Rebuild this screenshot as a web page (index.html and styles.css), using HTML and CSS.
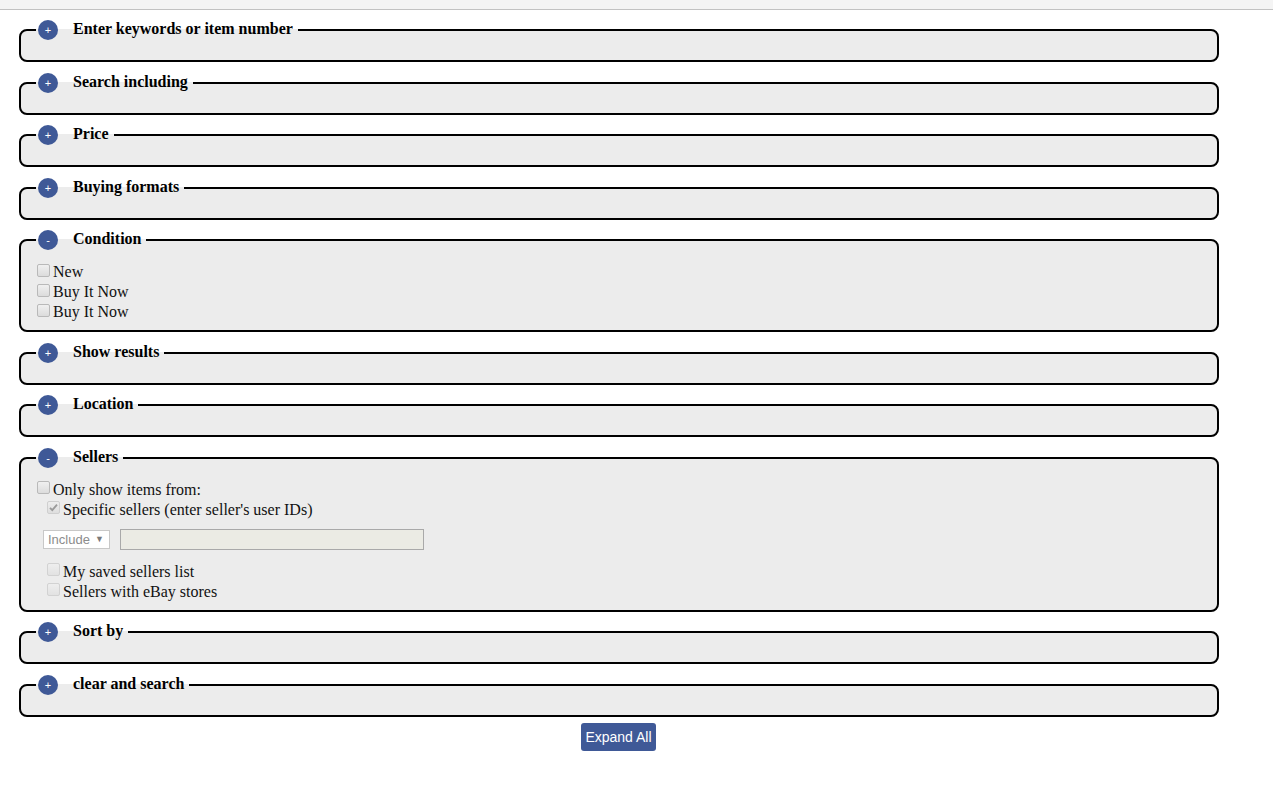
FILE: index.html
```html
<!DOCTYPE html>
<html lang="en">
<head>
<meta charset="utf-8">
<title>Advanced search</title>
<link rel="stylesheet" href="styles.css">
</head>
<body>
<div class="topbar"></div>
<main class="panel">
  <fieldset class="group">
    <legend class="group-title"><span class="toggle">+</span><span class="label">Enter keywords or item number</span></legend>
  </fieldset>
  <fieldset class="group">
    <legend class="group-title"><span class="toggle">+</span><span class="label">Search including</span></legend>
  </fieldset>
  <fieldset class="group">
    <legend class="group-title"><span class="toggle">+</span><span class="label">Price</span></legend>
  </fieldset>
  <fieldset class="group">
    <legend class="group-title"><span class="toggle">+</span><span class="label">Buying formats</span></legend>
  </fieldset>
  <fieldset class="group">
    <legend class="group-title"><span class="toggle">-</span><span class="label">Condition</span></legend>
    <div class="row"><span class="check"></span>New</div>
    <div class="row"><span class="check"></span>Buy It Now</div>
    <div class="row"><span class="check"></span>Buy It Now</div>
  </fieldset>
  <fieldset class="group">
    <legend class="group-title"><span class="toggle">+</span><span class="label">Show results</span></legend>
  </fieldset>
  <fieldset class="group">
    <legend class="group-title"><span class="toggle">+</span><span class="label">Location</span></legend>
  </fieldset>
  <fieldset class="group">
    <legend class="group-title"><span class="toggle">-</span><span class="label">Sellers</span></legend>
    <div class="row"><span class="check"></span>Only show items from:</div>
    <div class="row sub"><span class="check checked"><svg viewBox="0 0 13 13" width="13" height="13"><path d="M3 6.8 L5.3 9.2 L10 3.6" fill="none" stroke="#9a9a9a" stroke-width="1.8"/></svg></span>Specific sellers (enter seller's user IDs)</div>
    <div class="controls">
      <span class="select">Include <span class="arrow">&#9660;</span></span>
      <span class="text-input"></span>
    </div>
    <div class="row sub faded"><span class="check"></span>My saved sellers list</div>
    <div class="row sub faded"><span class="check"></span>Sellers with eBay stores</div>
  </fieldset>
  <fieldset class="group">
    <legend class="group-title"><span class="toggle">+</span><span class="label">Sort by</span></legend>
  </fieldset>
  <fieldset class="group">
    <legend class="group-title"><span class="toggle">+</span><span class="label">clear and search</span></legend>
  </fieldset>
  <div class="actions"><button class="expand" type="button">Expand All</button></div>
</main>
</body>
</html>
```

FILE: styles.css
```css
html, body {
  margin: 0;
  padding: 0;
  background: #fff;
}
body {
  font-family: "Liberation Serif", "Times New Roman", serif;
  font-size: 16px;
  color: #111;
}
.topbar {
  height: 9px;
  background: #f4f4f4;
  border-bottom: 1px solid #c2c2c2;
}
.panel {
  width: 1200px;
  padding: 10px 0 0 19px;
}
.group {
  margin: 0 0 10.5px 0;
  border: 2px solid #000;
  border-radius: 8px;
  background: #ececec;
  padding: 12px 12px 8px 12px;
  min-width: 0;
}
.group-title {
  display: flex;
  align-items: center;
  margin-left: 3px;
  padding: 0 5px 0 2px;
  height: 20px;
}
.toggle {
  width: 20px;
  height: 20px;
  border-radius: 50%;
  background: #3f5997;
  color: #fff;
  font-family: "Liberation Sans", Arial, sans-serif;
  font-size: 11px;
  line-height: 20px;
  text-align: center;
}
.label {
  position: relative;
  top: -1px;
  margin-left: 15px;
  font-weight: bold;
  font-size: 16px;
  color: #000;
  line-height: 20px;
}
.row {
  display: flex;
  align-items: center;
  height: 20px;
  line-height: 20px;
  color: #111;
}
.row.sub {
  padding-left: 10px;
}
.check {
  box-sizing: border-box;
  width: 13px;
  height: 13px;
  margin: 0 3px 0 4px;
  border: 1px solid #b9b9b9;
  border-radius: 2px;
  background: linear-gradient(#f0f0f0, #dcdcdc);
  position: relative;
  top: -2px;
  flex: none;
}
.check.checked {
  background: linear-gradient(#ededed, #dedede);
  border-color: #cfcfcf;
}
.check svg {
  display: block;
  margin: -1px;
}
.faded .check {
  border-color: #d2d2d2;
  background: linear-gradient(#eeeeee, #e2e2e2);
}
.controls {
  display: flex;
  align-items: center;
  padding: 9px 0 12px 10px;
  gap: 10px;
}
.select {
  box-sizing: border-box;
  display: inline-flex;
  align-items: center;
  width: 67px;
  height: 19px;
  padding: 0 4px;
  background: #fff;
  border: 1px solid #c8c8c8;
  color: #8c8c8c;
  font-family: "Liberation Sans", Arial, sans-serif;
  font-size: 13px;
}
.arrow {
  font-size: 9px;
  margin-left: 5px;
  color: #7a7a7a;
}
.text-input {
  box-sizing: border-box;
  width: 304px;
  height: 21px;
  background: #ebebe4;
  border: 1px solid #a9a9a9;
}
.actions {
  display: flex;
  justify-content: center;
}
.expand {
  width: 75px;
  height: 28px;
  margin: -4px 1px 0 0;
  border: none;
  border-radius: 3px;
  background: #3f5997;
  color: #fff;
  font-family: "Liberation Sans", Arial, sans-serif;
  font-size: 14px;
  padding: 0;
}
```
